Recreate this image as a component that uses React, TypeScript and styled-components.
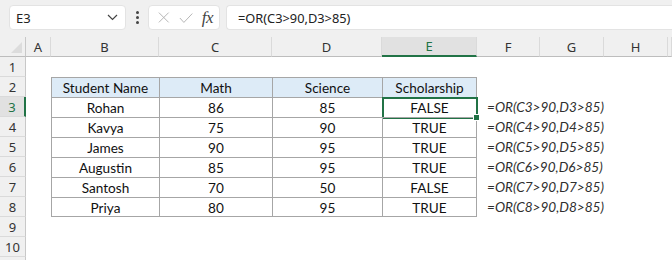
import styled, { createGlobalStyle, css } from "styled-components";

const GlobalStyle = createGlobalStyle`
  html, body {
    margin: 0;
    padding: 0;
    background: #ffffff;
    overflow: hidden;
  }
`;

const GREEN = "#217346";
const TABLE_LINE = "#a6a6a6";

type Student = { name: string; math: number; science: number };

const students: Student[] = [
  { name: "Rohan", math: 86, science: 85 },
  { name: "Kavya", math: 75, science: 90 },
  { name: "James", math: 90, science: 95 },
  { name: "Augustin", math: 85, science: 95 },
  { name: "Santosh", math: 70, science: 50 },
  { name: "Priya", math: 80, science: 95 },
];

const columns = ["A", "B", "C", "D", "E", "F", "G", "H", ""];
const activeCol = "E";
const activeRow = 3;

const Toolbar = styled.div`
  display: flex;
  align-items: center;
  height: 37px;
  padding: 0 0 2px 9px;
  box-sizing: border-box;
  background: #f0f0f0;
  font-family: "Noto Sans", "Open Sans", sans-serif;
`;

const Box = styled.div`
  height: 25px;
  box-sizing: border-box;
  background: #ffffff;
  border: 1px solid #e3e3e3;
  border-radius: 4px;
  display: flex;
  align-items: center;
`;

const NameBox = styled(Box)`
  width: 117px;
  padding: 0 7px 0 6px;
  justify-content: space-between;
  font-size: 13px;
  color: #222;
`;

const Dots = styled.div`
  width: 22px;
  display: flex;
  flex-direction: column;
  align-items: center;
  gap: 2px;

  span {
    width: 3px;
    height: 3px;
    background: #444;
    border-radius: 50%;
  }
`;

const FxBox = styled(Box)`
  width: 72px;
  padding: 0 6px 0 9px;
  gap: 9px;
`;

const FxLabel = styled.span`
  margin-left: auto;
  font-family: "Liberation Serif", serif;
  font-style: italic;
  font-size: 17px;
  color: #444;
  letter-spacing: -0.5px;
`;

const FormulaBox = styled(Box)`
  flex: 1;
  margin-left: 6px;
  border-right: none;
  border-radius: 4px 0 0 4px;
  padding-left: 11px;
  font-size: 12.8px;
  color: #222;
`;

const Sheet = styled.div`
  display: grid;
  grid-template-columns: 26px 25px 108px 113px 110px 95px 63px 64px 64px 1fr;
  grid-auto-rows: 20px;
  font-family: "Lato", "Liberation Sans", sans-serif;
  font-size: 13.6px;
  color: #111;
`;

const Corner = styled.div`
  position: relative;
  background: #f0f0f0;
  border-right: 1px solid #c8c8c8;
  border-bottom: 1px solid #bdbdbd;

  &::after {
    content: "";
    position: absolute;
    right: 3px;
    bottom: 3px;
    border-style: solid;
    border-width: 0 0 11px 11px;
    border-color: transparent transparent #dcdcdc transparent;
  }
`;

const ColHead = styled.div<{ $active?: boolean }>`
  display: flex;
  align-items: center;
  justify-content: center;
  box-sizing: border-box;
  background: #f0f0f0;
  border-right: 1px solid #dadada;
  border-bottom: 1px solid #bdbdbd;
  font-family: "Noto Sans", "Open Sans", sans-serif;
  font-size: 13px;
  color: #333;
  ${(p) =>
    p.$active &&
    css`
      background: #e1e1e1;
      color: ${GREEN};
      border-bottom: 2px solid ${GREEN};
    `}
`;

const RowHead = styled.div<{ $active?: boolean }>`
  display: flex;
  align-items: center;
  justify-content: center;
  box-sizing: border-box;
  background: #f0f0f0;
  border-right: 1px solid #c8c8c8;
  border-bottom: 1px solid #dadada;
  font-family: "Noto Sans", "Open Sans", sans-serif;
  font-size: 13px;
  color: #333;
  ${(p) =>
    p.$active &&
    css`
      background: #e1e1e1;
      color: ${GREEN};
      border-right: 2px solid ${GREEN};
    `}
`;

const Cell = styled.div<{
  $table?: boolean;
  $head?: boolean;
  $lastCol?: boolean;
  $lastRow?: boolean;
  $selected?: boolean;
  $formula?: boolean;
}>`
  position: relative;
  display: flex;
  align-items: center;
  justify-content: center;
  box-sizing: border-box;
  white-space: nowrap;
  ${(p) =>
    p.$table &&
    css`
      border-left: 1px solid ${TABLE_LINE};
      border-top: 1px solid ${TABLE_LINE};
      padding-top: 1px;
    `}
  ${(p) => p.$lastCol && `border-right: 1px solid ${TABLE_LINE};`}
  ${(p) => p.$lastRow && `border-bottom: 1px solid ${TABLE_LINE};`}
  ${(p) => p.$head && `background: #ddebf7;`}
  ${(p) =>
    p.$formula &&
    css`
      justify-content: flex-start;
      padding-left: 10px;
      font-style: italic;
      color: #2f2f2f;
      overflow: visible;
    `}
  ${(p) =>
    p.$selected &&
    css`
      &::after {
        content: "";
        position: absolute;
        left: -1px;
        top: -1px;
        right: -2px;
        bottom: -2px;
        border: 2px solid ${GREEN};
        pointer-events: none;
      }
      &::before {
        content: "";
        position: absolute;
        right: -4px;
        bottom: -4px;
        width: 5px;
        height: 5px;
        background: ${GREEN};
        border: 1px solid #fff;
        z-index: 1;
      }
    `}
`;

const Chevron = () => (
  <svg width="11" height="7" viewBox="0 0 11 7" fill="none">
    <path d="M1 1l4.5 4.5L10 1" stroke="#444" strokeWidth="1.2" />
  </svg>
);

const Cross = () => (
  <svg width="13" height="13" viewBox="0 0 13 13" fill="none">
    <path d="M1 1l11 11M12 1L1 12" stroke="#b4b4b4" strokeWidth="1.1" />
  </svg>
);

const Check = () => (
  <svg width="16" height="12" viewBox="0 0 16 12" fill="none">
    <path d="M1 6l4.5 5L15 1" stroke="#b4b4b4" strokeWidth="1.1" />
  </svg>
);

const orFormula = (r: number) => `=OR(C${r}>90,D${r}>85)`;

const SheetRow = ({ row }: { row: number }) => {
  const student = row >= 3 && row <= 8 ? students[row - 3] : undefined;
  const isHead = row === 2;
  const inTable = isHead || !!student;
  const lastRow = row === 8;
  const values: string[] = isHead
    ? ["Student Name", "Math", "Science", "Scholarship"]
    : student
    ? [
        student.name,
        String(student.math),
        String(student.science),
        student.math > 90 || student.science > 85 ? "TRUE" : "FALSE",
      ]
    : [];

  return (
    <>
      <RowHead $active={row === activeRow}>{row <= 10 ? row : null}</RowHead>
      <Cell />
      {[0, 1, 2, 3].map((i) =>
        inTable ? (
          <Cell
            key={i}
            $table
            $head={isHead}
            $lastCol={i === 3}
            $lastRow={lastRow}
            $selected={i === 3 && row === activeRow}
          >
            {values[i]}
          </Cell>
        ) : (
          <Cell key={i} />
        )
      )}
      <Cell $formula={!!student}>{student ? orFormula(row) : null}</Cell>
      <Cell />
      <Cell />
      <Cell />
    </>
  );
};

const App = () => {
  const rows = Array.from({ length: 11 }, (_, i) => i + 1);
  return (
    <>
      <GlobalStyle />
      <Toolbar>
        <NameBox>
          <span>E3</span>
          <Chevron />
        </NameBox>
        <Dots>
          <span />
          <span />
          <span />
        </Dots>
        <FxBox>
          <Cross />
          <Check />
          <FxLabel>fx</FxLabel>
        </FxBox>
        <FormulaBox>{orFormula(3)}</FormulaBox>
      </Toolbar>
      <Sheet>
        <Corner />
        {columns.map((c, i) => (
          <ColHead key={i} $active={c === activeCol}>
            {c}
          </ColHead>
        ))}
        {rows.map((r) => (
          <SheetRow key={r} row={r} />
        ))}
      </Sheet>
    </>
  );
};

export default App;
